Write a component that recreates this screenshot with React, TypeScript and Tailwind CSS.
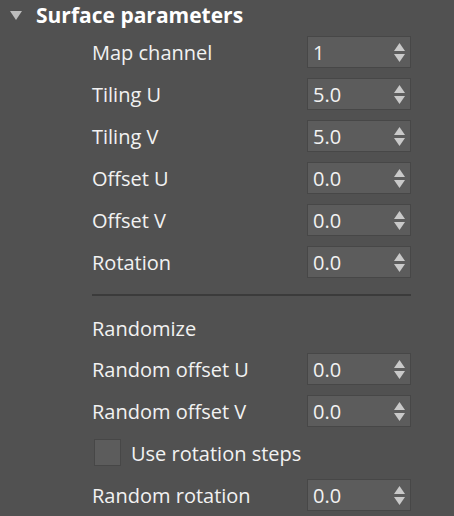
import React from 'react'

// Surface parameters rollout — spinner rows
const Spinner = ({ value }: { value: string }) => (
  <div className="w-[104px] h-[32px] bg-[#5c5c5c] border border-[#474747] flex items-center justify-between pl-[5px] pr-[5px]">
    <span className="text-[20px] leading-none pt-[2px] text-[#f2f2f2]">{value}</span>
    <div className="flex flex-col items-center gap-[3px]">
      <svg width="11" height="8" viewBox="0 0 11 8">
        <path d="M5.5 0 L11 8 L0 8 Z" fill="#c9c9c9" />
      </svg>
      <svg width="11" height="8" viewBox="0 0 11 8">
        <path d="M0 0 L11 0 L5.5 8 Z" fill="#c9c9c9" />
      </svg>
    </div>
  </div>
)

const Row = ({ label, value, className = '' }: { label: string; value: string; className?: string }) => (
  <div className={`flex items-center justify-between h-[32px] ${className}`}>
    <span className="text-[20px] leading-none pt-[2px] text-[#f2f2f2]">{label}</span>
    <Spinner value={value} />
  </div>
)

export default function App() {
  const rows = [
    ['Map channel', '1'],
    ['Tiling U', '5.0'],
    ['Tiling V', '5.0'],
    ['Offset U', '0.0'],
    ['Offset V', '0.0'],
    ['Rotation', '0.0'],
  ]

  return (
    <div
      className="w-[454px] h-[516px] bg-[#515151] overflow-hidden text-[#f2f2f2]"
      style={{ fontFamily: '"Open Sans", "Noto Sans", sans-serif' }}
    >
      <div className="flex items-center h-[30px] pl-[10px]">
        <svg width="12" height="9" viewBox="0 0 12 9" className="mt-[1px]">
          <path d="M0 0 L12 0 L6 9 Z" fill="#bdbdbd" />
        </svg>
        <span className="ml-[14px] text-[21px] font-bold leading-none pt-[1px] text-white">Surface parameters</span>
      </div>

      <div className="pl-[92px] pr-[43px] mt-[6px]">
        <div className="flex flex-col gap-[10px]">
          {rows.map(([l, v]) => (
            <Row key={l} label={l} value={v} />
          ))}
        </div>

        <div className="mt-[16px] h-[2px] bg-[#3b3b3b]" />

        <div className="mt-[16px] h-[32px] flex items-center">
          <span className="text-[20px] leading-none pt-[2px]">Randomize</span>
        </div>

        <Row label="Random offset U" value="0.0" className="mt-[9px]" />
        <Row label="Random offset V" value="0.0" className="mt-[10px]" />

        <div className="mt-[12px] h-[27px] flex items-center">
          <div className="ml-[2px] w-[27px] h-[27px] bg-[#5c5c5c] border border-[#474747]" />
          <span className="ml-[10px] text-[20px] leading-none pt-[2px]">Use rotation steps</span>
        </div>

        <Row label="Random rotation" value="0.0" className="mt-[13px]" />
      </div>
    </div>
  )
}
